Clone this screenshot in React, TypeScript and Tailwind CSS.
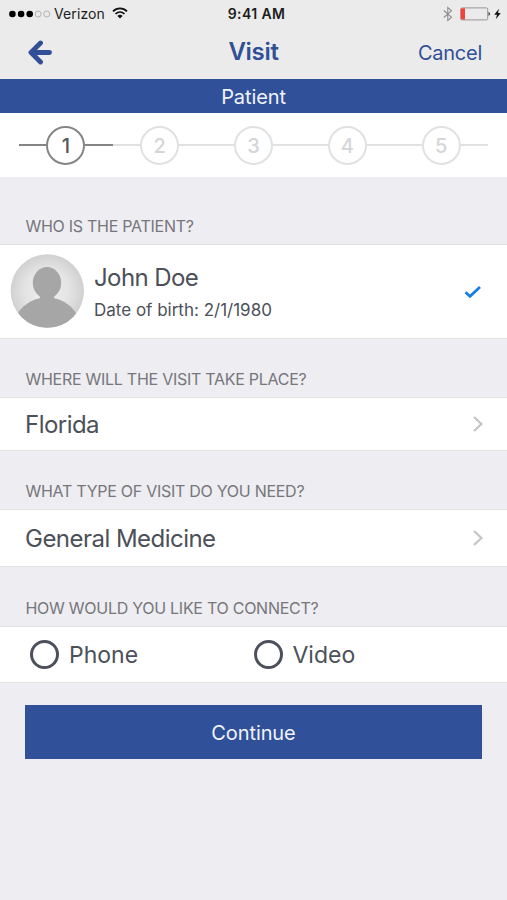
import React from "react";
import clsx from "clsx";

const steps = [1, 2, 3, 4, 5];

const SectionLabel = ({ children, className }: { children: React.ReactNode; className?: string }) => (
  <h2
    className={clsx(
      "flex items-end pl-[25.5px] text-[16px] leading-5 font-normal tracking-[-0.27px] whitespace-nowrap text-[#76767b]",
      className
    )}
  >
    {children}
  </h2>
);

const Card = ({ children, className }: { children: React.ReactNode; className?: string }) => (
  <div className={clsx("flex items-center border-y border-[#e2e2e5] bg-white text-[#4c5059]", className)}>
    {children}
  </div>
);

const SelectRow = ({ value, className }: { value: string; className?: string }) => (
  <Card className={clsx("pr-[23px] pl-[25px]", className)}>
    <span className="pt-[2px] text-[24px] tracking-[-0.53px]">{value}</span>
    <svg width="12" height="18" viewBox="0 0 12 18" fill="none" className="ml-auto">
      <path d="M2 2L9.4 9L2 16" stroke="#c4c4c7" strokeWidth="2.2" />
    </svg>
  </Card>
);

const Avatar = () => (
  <svg width="74" height="74" viewBox="0 0 74 74" className="mb-[2px] shrink-0">
    <defs>
      <radialGradient id="avatar-bg">
        <stop offset="0" stopColor="#efefef" />
        <stop offset="0.6" stopColor="#e4e4e4" />
        <stop offset="1" stopColor="#d0d0d0" />
      </radialGradient>
      <clipPath id="avatar-clip">
        <circle cx="37.3" cy="37" r="36.7" />
      </clipPath>
    </defs>
    <g clipPath="url(#avatar-clip)">
      <rect width="74" height="74" fill="url(#avatar-bg)" />
      <ellipse cx="37" cy="28.8" rx="14.2" ry="15.8" fill="#a6a6a6" />
      <path d="M28 38H46Q43 42.5 44.5 44.3H29.5Q31 42.5 28 38Z" fill="#a6a6a6" />
      <ellipse cx="37" cy="73" rx="33" ry="29.5" fill="#a6a6a6" />
    </g>
  </svg>
);

const StatusBar = () => (
  <div className="grid h-[27px] grid-cols-3 items-center text-[14px] text-[#1c1c1c]">
    <div className="flex items-center pl-[9px]">
      <svg width="42" height="8" viewBox="0 0 42 8">
        <circle cx="3.4" cy="4" r="3.3" fill="#000" />
        <circle cx="12.1" cy="4" r="3.3" fill="#000" />
        <circle cx="20.7" cy="4" r="3.3" fill="#000" />
        <circle cx="29.2" cy="4" r="3" fill="none" stroke="#a3a3a3" strokeWidth="0.8" />
        <circle cx="37.8" cy="4" r="3" fill="none" stroke="#a3a3a3" strokeWidth="0.8" />
      </svg>
      <span className="ml-[3px] tracking-[0.1px]">Verizon</span>
      <svg width="16" height="12" viewBox="0 0 16 12" fill="none" className="mb-[2px] ml-[7px] shrink-0">
        <path d="M1 4.3C5 0.3 11 0.3 15 4.3" stroke="#111" strokeWidth="1.8" />
        <path d="M3.5 7C6.1 4.4 9.9 4.4 12.5 7" stroke="#111" strokeWidth="1.7" />
        <path d="M8 11.5L5.4 8.9C6.8 7.5 9.2 7.5 10.6 8.9Z" fill="#111" />
      </svg>
    </div>
    <div className="pl-[6px] text-center font-semibold tracking-[0.4px] whitespace-nowrap">9:41 AM</div>
    <div className="flex items-center justify-end pr-[6px]">
      <svg width="10" height="16" viewBox="0 0 10 16" fill="none" className="mr-[7px]">
        <path d="M0.8 4.5L8.5 11.2L4.8 14.6V1.4L8.5 4.8L0.8 11.5" stroke="#8e8e8e" strokeWidth="1.1" />
      </svg>
      <svg width="31" height="14" viewBox="0 0 31 14">
        <rect x="0.9" y="0.9" width="26.8" height="12" rx="1.5" fill="none" stroke="#8b8b8b" strokeWidth="0.9" />
        <path d="M1.5 1.2H5V12.6H1.5Q0.6 12.6 0.6 11.6V2.2Q0.6 1.2 1.5 1.2Z" fill="#f2453a" />
        <path d="M28.5 5C30.6 5.3 30.6 8.5 28.5 8.8Z" fill="#444" />
      </svg>
      <svg width="7" height="12" viewBox="0 0 7 12" className="ml-[3px]">
        <path d="M5 0.8L0.2 6.7H3L1.8 11.2L6.8 5H4Z" fill="#111" />
      </svg>
    </div>
  </div>
);

const NavBar = () => (
  <div className="grid h-[50px] grid-cols-3 items-center text-[#314f97]">
    <button className="pl-[28px]" aria-label="Back">
      <svg width="25" height="25" viewBox="0 0 25 25" fill="none">
        <path
          d="M12.5 3L3 12.5L12.5 22M3.5 12.5H21.5"
          stroke="currentColor"
          strokeWidth="4.9"
          strokeLinecap="round"
          strokeLinejoin="round"
        />
      </svg>
    </button>
    <h1 className="text-center text-[24px] font-semibold tracking-[-0.3px]">Visit</h1>
    <button className="pt-[2px] pr-[25px] text-right text-[20px] tracking-[-0.25px]">Cancel</button>
  </div>
);

const Stepper = ({ current }: { current: number }) => (
  <div className="flex h-[64px] items-center bg-white px-[19px]">
    {steps.map((step) => (
      <div
        key={step}
        className={clsx("flex flex-1 items-center", step === current ? "text-[#54575b]" : "text-[#d5d6d7]")}
      >
        <span className={clsx("h-[2px] flex-1", step === current ? "bg-[#838587]" : "bg-[#e0e1e2]")} />
        <span
          className={clsx(
            "flex size-[39px] items-center justify-center rounded-full border-2 pt-[2px] text-[20px] font-medium",
            step === current ? "border-[#838587]" : "border-[#e0e1e2]"
          )}
        >
          {step}
        </span>
        <span className={clsx("h-[2px] flex-1", step === current ? "bg-[#838587]" : "bg-[#e0e1e2]")} />
      </div>
    ))}
  </div>
);

const RadioOption = ({ label, className }: { label: string; className?: string }) => (
  <label className={clsx("flex items-center gap-[10px] text-[23px]", className)}>
    <span className="mb-px size-[29px] rounded-full border-[3px] border-[#4c505c]" />
    <span className="pt-[2px]">{label}</span>
  </label>
);

const App = () => {
  return (
    <div className="flex h-[900px] w-[507px] flex-col overflow-hidden bg-[#eeedf2] font-['Inter',sans-serif]">
      <header className="h-[79px] bg-[#ebebeb]">
        <StatusBar />
        <NavBar />
      </header>
      <div className="flex h-[34px] items-center justify-center bg-[#305099] text-[20px] text-[#f0f4fb]">
        <span className="pt-[2px] tracking-[-0.1px]">Patient</span>
      </div>
      <Stepper current={1} />

      <SectionLabel className="h-[67px] pb-[8px]">WHO IS THE PATIENT?</SectionLabel>
      <Card className="h-[95px] pl-[10px]">
        <Avatar />
        <div className="ml-[10px] pt-[2px]">
          <div className="text-[24px] leading-8 tracking-[-0.6px]">John Doe</div>
          <div className="mt-[2px] text-[17px] leading-7">Date of birth: 2/1/1980</div>
        </div>
        <svg width="18" height="14" viewBox="0 0 18 14" fill="none" className="mr-[25px] ml-auto">
          <path d="M1.5 7.2L6 11.3L16 2" stroke="#177ce8" strokeWidth="2.7" />
        </svg>
      </Card>

      <SectionLabel className="h-[58px] pb-[8px]">WHERE WILL THE VISIT TAKE PLACE?</SectionLabel>
      <SelectRow value="Florida" className="h-[54px]" />

      <SectionLabel className="h-[58px] pb-[8px]">WHAT TYPE OF VISIT DO YOU NEED?</SectionLabel>
      <SelectRow value="General Medicine" className="h-[58px]" />

      <SectionLabel className="h-[59px] pb-[8px]">HOW WOULD YOU LIKE TO CONNECT?</SectionLabel>
      <Card className="h-[57px] pl-[30px]">
        <RadioOption label="Phone" className="w-[223.5px]" />
        <RadioOption label="Video" />
      </Card>

      <button className="mx-[25px] mt-[22px] h-[54px] bg-[#305099] pt-[2px] text-[20px] tracking-[-0.1px] text-[#f0f4fb]">
        Continue
      </button>
    </div>
  );
};

export default App;
